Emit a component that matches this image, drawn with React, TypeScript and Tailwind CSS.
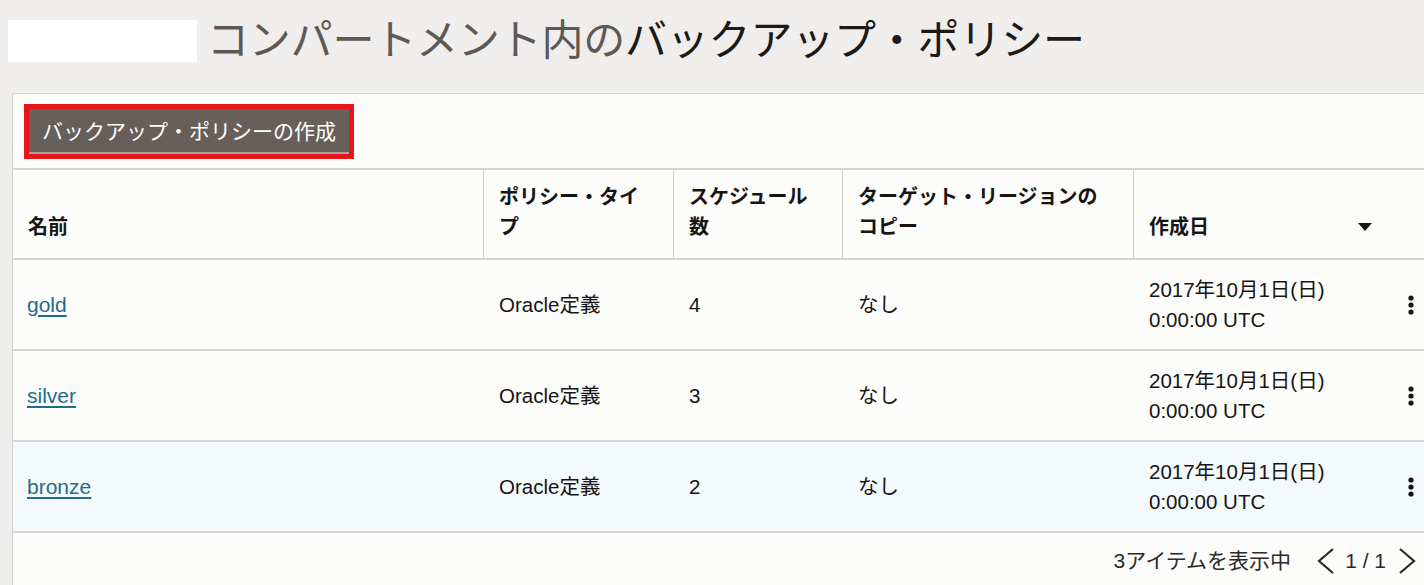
import React from "react";

const FONT = { fontFamily: '"Liberation Sans", "Noto Sans CJK JP", sans-serif' };

const rows = [
  { name: "gold", count: "4", hover: false },
  { name: "silver", count: "3", hover: false },
  { name: "bronze", count: "2", hover: true },
];

const cols = "grid grid-cols-[471px_190px_169px_291px_260px_49px]";

function Kebab() {
  return (
    <svg width="6" height="20" viewBox="0 0 6 20" className="block">
      <circle cx="3" cy="3" r="2.6" fill="#161513" />
      <circle cx="3" cy="10" r="2.6" fill="#161513" />
      <circle cx="3" cy="17" r="2.6" fill="#161513" />
    </svg>
  );
}

export default function App() {
  return (
    <div className="w-[1424px] h-[585px] overflow-hidden bg-[#efeeec] text-[#161513]" style={FONT}>
      <div className="flex items-center h-[82px] pl-[8px]">
        <div className="w-[189px] h-[42px] bg-white" />
        <h1 className="ml-[10px] text-[42px] leading-[50px] font-normal tracking-[-0.2px]">
          <span className="text-[#5e5955]">コンパートメント内の</span>
          <span className="text-[#1b1a19]">バックアップ・ポリシー</span>
        </h1>
      </div>

      <div className="ml-[12px] mt-[11px] w-[1430px] bg-[#fcfcfb] border border-[#d2d1cf]">
        <div className="h-[74px] pl-[11px] pt-[10px]">
          <div className="inline-block border-[5px] border-[#e8161a]">
            <button className="h-[45px] px-[13px] bg-[#665f5a] text-white text-[21px] leading-[45px] border-b-2 border-[#a8a19c] box-border">
              バックアップ・ポリシーの作成
            </button>
          </div>
        </div>

        <div className={`${cols} h-[92px] border-t-2 border-b-2 border-[#d6d5d3] font-bold text-[20px] leading-[30px]`}>
          <div className="flex items-end pl-[15px] pb-[16px] border-r border-[#cfcecc]">名前</div>
          <div className="flex items-end pl-[15px] pb-[16px] border-r border-[#cfcecc]">ポリシー・タイ<br />プ</div>
          <div className="flex items-end pl-[15px] pb-[16px] border-r border-[#cfcecc]">スケジュール<br />数</div>
          <div className="flex items-end pl-[15px] pb-[16px] border-r border-[#cfcecc]">ターゲット・リージョンの<br />コピー</div>
          <div className="col-span-2 flex items-end justify-between pl-[15px] pr-[71px] pb-[16px]">
            <span>作成日</span>
            <svg width="14" height="9" viewBox="0 0 14 9" className="mb-[10px]">
              <path d="M0 0 L14 0 L7 8 Z" fill="#161513" />
            </svg>
          </div>
        </div>

        {rows.map((r) => (
          <div
            key={r.name}
            className={`${cols} h-[91px] border-b-2 border-[#d6d5d3] text-[20.5px] leading-[30px] ${r.hover ? "bg-[#f4f9fc]" : ""}`}
          >
            <div className="flex items-center pl-[14px]">
              <a href="#" className="text-[#1e6d8c] underline underline-offset-[3px] decoration-[1.5px] text-[21px]">{r.name}</a>
            </div>
            <div className="flex items-center pl-[15px]">Oracle定義</div>
            <div className="flex items-center pl-[15px]">{r.count}</div>
            <div className="flex items-center pl-[15px]">なし</div>
            <div className="flex flex-col justify-center pl-[15px]">
              <span>2017年10月1日(日)</span>
              <span>0:00:00 UTC</span>
            </div>
            <div className="flex items-center pl-[14px]">
              <Kebab />
            </div>
          </div>
        ))}

        <div className="h-[60px] flex items-center justify-end pr-[24px] text-[21px] text-[#2b2a28]">
          <span className="mb-[4px]">3アイテムを表示中</span>
          <svg width="20" height="28" viewBox="0 0 20 28" className="ml-[25px] mb-[4px]">
            <path d="M17 2 L3 14 L17 26" stroke="#2b2a28" strokeWidth="2.2" fill="none" />
          </svg>
          <span className="ml-[9px] mb-[4px]">1 / 1</span>
          <svg width="20" height="28" viewBox="0 0 20 28" className="ml-[11px] mb-[4px]">
            <path d="M3 2 L17 14 L3 26" stroke="#2b2a28" strokeWidth="2.2" fill="none" />
          </svg>
        </div>
      </div>
    </div>
  );
}
